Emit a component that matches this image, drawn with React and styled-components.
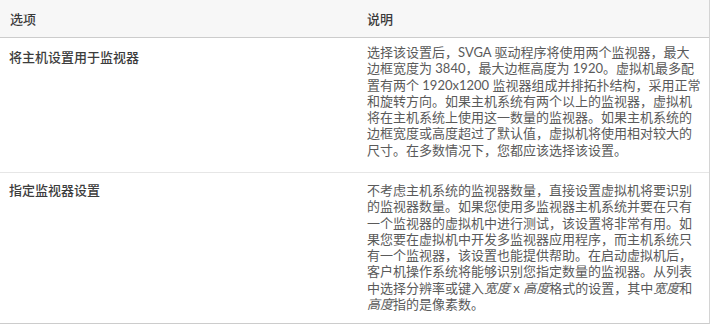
import styled, { createGlobalStyle } from "styled-components";

const GlobalStyle = createGlobalStyle`
  body {
    margin: 0;
    background: #fff;
    font-family: Lato, "Noto Sans CJK SC", sans-serif;
  }
`;

const Table = styled.div`
  width: 710px;
  box-sizing: border-box;
  border-right: 1px solid #d4d4d4;
  border-bottom: 1px solid #cccccc;
`;

const HeadRow = styled.div`
  display: grid;
  grid-template-columns: 357px 1fr;
  height: 37px;
  background: #f7f7f7;
  border-bottom: 1px solid #cccccc;
`;

const HeadCell = styled.div`
  display: flex;
  align-items: center;
  padding: 0 10px;
  font-size: 13px;
  font-weight: 500;
  color: #3a3a3a;
`;

const Row = styled.div`
  display: grid;
  grid-template-columns: 357px 1fr;
  height: ${(p) => p.$height}px;
  border-top: ${(p) => (p.$divider ? "1px solid #e6e6e6" : "none")};
`;

const Label = styled.div`
  padding: ${(p) => p.$top}px 10px 0 9px;
  font-size: 13px;
  line-height: 16px;
  font-weight: 500;
  color: #3c3c3c;
`;

const Desc = styled.div`
  padding: ${(p) => p.$top}px 10px 0 10px;
  font-size: 13px;
  line-height: 16.3px;
  color: #5a5a5a;
  white-space: nowrap;

  em {
    font-style: italic;
  }
`;

const App = () => {
  return (
    <>
      <GlobalStyle />
      <Table>
        <HeadRow>
          <HeadCell>选项</HeadCell>
          <HeadCell>说明</HeadCell>
        </HeadRow>
        <Row $height={134}>
          <Label $top={11}>将主机设置用于监视器</Label>
          <Desc $top={6}>
            选择该设置后，SVGA 驱动程序将使用两个监视器，最大<br />
            边框宽度为 3840，最大边框高度为 1920。虚拟机最多配<br />
            置有两个 1920x1200 监视器组成并排拓扑结构，采用正常<br />
            和旋转方向。如果主机系统有两个以上的监视器，虚拟机<br />
            将在主机系统上使用这一数量的监视器。如果主机系统的<br />
            边框宽度或高度超过了默认值，虚拟机将使用相对较大的<br />
            尺寸。在多数情况下，您都应该选择该设置。
          </Desc>
        </Row>
        <Row $height={150} $divider>
          <Label $top={9}>指定监视器设置</Label>
          <Desc $top={9}>
            不考虑主机系统的监视器数量，直接设置虚拟机将要识别<br />
            的监视器数量。如果您使用多监视器主机系统并要在只有<br />
            一个监视器的虚拟机中进行测试，该设置将非常有用。如<br />
            果您要在虚拟机中开发多监视器应用程序，而主机系统只<br />
            有一个监视器，该设置也能提供帮助。在启动虚拟机后，<br />
            客户机操作系统将能够识别您指定数量的监视器。从列表<br />
            中选择分辨率或键入<em>宽度</em> x <em>高度</em>格式的设置，其中<em>宽度</em>和<br />
            <em>高度</em>指的是像素数。
          </Desc>
        </Row>
      </Table>
    </>
  );
};

export default App;
